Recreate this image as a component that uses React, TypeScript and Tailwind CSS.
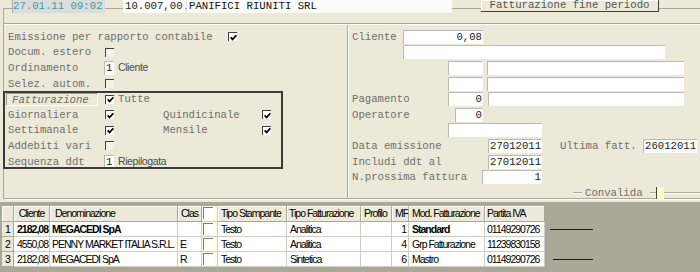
import React from 'react';

const mono = "font-['Liberation_Mono','Courier_New',monospace]";
const sans = "font-['Liberation_Sans',Arial,sans-serif]";

const Check: React.FC<{ on?: boolean }> = ({ on }) => (
  <span
    className={`w-[9px] h-[9px] shrink-0 flex items-center justify-center border-t border-l border-[#404040] ${
      on ? 'bg-white' : 'bg-[#f3f1ea]'
    }`}
  >
    {on && (
      <svg width="7" height="7" viewBox="0 0 7 7">
        <path d="M0.6 3.4 L2.6 5.4 L6.4 1.2" stroke="#000" strokeWidth="1.7" fill="none" />
      </svg>
    )}
  </span>
);

const Field: React.FC<{ className?: string; right?: boolean; children?: React.ReactNode }> = ({
  className = '',
  right,
  children,
}) => (
  <div
    className={`h-[14px] shrink-0 bg-white border-t border-l border-[#bcb9ad] text-[#222] leading-[13px] px-[1px] whitespace-nowrap overflow-hidden ${
      right ? 'text-right' : ''
    } ${className}`}
  >
    {children}
  </div>
);

const Row: React.FC<{ className?: string; children?: React.ReactNode }> = ({ className = 'pl-[4px]', children }) => (
  <div className={`h-[15.6px] flex items-center whitespace-nowrap ${className}`}>{children}</div>
);

const TopRow = () => (
  <div className="-mt-[9px] h-[24px] shrink-0 border-b border-[#aca899]">
    <div className="flex items-start h-[13px]">
      <div className="ml-[8px] w-[93px] h-[13px] bg-[#dcdcdc] border-l border-[#b0b0b0] text-[#3a9c9c] leading-[13px]">
        27.01.11 09:02
      </div>
      <div className="ml-[18px] w-[62px] h-[13px] bg-white text-[#1a1a1a] leading-[13px] pl-[2px]">10.007,00</div>
      <div className="ml-[2px] w-[265px] h-[13px] bg-[#fbfbf9] text-[#111] leading-[13px] pl-[2px]">
        PANIFICI RIUNITI SRL
      </div>
      <div className="ml-[29px] w-[178px] h-[12px] bg-[#ece9d8] border-r border-b border-[#404040] shadow-[inset_1px_1px_0_#fff] text-center leading-[11px] text-[#555]">
        Fatturazione fine periodo
      </div>
    </div>
  </div>
);

const LeftPanel = () => (
  <div className="w-[343px] shrink-0 pt-[4px]">
    <Row>
      <span className="w-[220px]">Emissione per rapporto contabile</span>
      <Check on />
    </Row>
    <Row>
      <span className="w-[97px]">Docum. estero</span>
      <Check />
    </Row>
    <Row>
      <span className="w-[96px]">Ordinamento</span>
      <Field className="w-[10px] pl-[1px]">1</Field>
      <span className={`${sans} ml-[4px] text-[10.5px] tracking-[-0.4px] text-[#4a4a4a]`}>Cliente</span>
    </Row>
    <Row>
      <span className="w-[97px]">Selez. autom.</span>
      <Check />
    </Row>
    <div className="-ml-px w-[280px] outline-2 outline-[#3a3a3a] -outline-offset-2">
      <Row className="pl-[3px]">
        <span className="w-[92px] h-[13px] border-t border-l border-[#9d9a90] border-b border-r border-b-white border-r-white italic leading-[12px] pl-[5px] text-[#6a6a6a]">
          Fatturazione
        </span>
        <span className="ml-[7px]">
          <Check on />
        </span>
        <span className="ml-[4px]">Tutte</span>
      </Row>
      <Row className="pl-[5px]">
        <span className="w-[97px]">Giornaliera</span>
        <Check on />
        <span className="ml-[49px] w-[99px]">Quindicinale</span>
        <Check on />
      </Row>
      <Row className="pl-[5px]">
        <span className="w-[97px]">Settimanale</span>
        <Check on />
        <span className="ml-[49px] w-[99px]">Mensile</span>
        <Check on />
      </Row>
      <Row className="pl-[5px]">
        <span className="w-[97px]">Addebiti vari</span>
        <Check />
      </Row>
      <Row className="pl-[5px]">
        <span className="w-[96px]">Sequenza ddt</span>
        <Field className="w-[10px] pl-[1px]">1</Field>
        <span className={`${sans} ml-[4px] text-[10.5px] tracking-[-0.4px] text-[#4a4a4a]`}>Riepilogata</span>
      </Row>
    </div>
  </div>
);

const RightPanel = () => (
  <div className="flex-1 border-l border-[#aca899] shadow-[inset_1px_0_0_#fff] pt-[4px]">
    <Row>
      <span className="w-[51px]">Cliente</span>
      <Field className="w-[80px]" right>
        0,08
      </Field>
    </Row>
    <Row>
      <Field className="ml-[51px] w-[262px]" />
    </Row>
    <Row>
      <Field className="ml-[96px] w-[35px]" />
      <Field className="ml-[4px] w-[197px]" />
    </Row>
    <Row>
      <Field className="ml-[96px] w-[35px]" />
      <Field className="ml-[4px] w-[197px]" />
    </Row>
    <Row>
      <span className="w-[96px]">Pagamento</span>
      <Field className="w-[35px]" right>
        0
      </Field>
      <Field className="ml-[5px] w-[196px]" />
    </Row>
    <Row>
      <span className="w-[103px]">Operatore</span>
      <Field className="w-[28px]" right>
        0
      </Field>
    </Row>
    <Row>
      <Field className="ml-[96px] w-[94px]" />
    </Row>
    <Row>
      <span className="w-[136px]">Data emissione</span>
      <Field className="w-[54px]">27012011</Field>
      <span className="ml-[18px] w-[83px]">Ultima fatt.</span>
      <Field className="w-[54px] bg-[#f4f4f2]">26012011</Field>
    </Row>
    <Row>
      <span className="w-[136px]">Includi ddt al</span>
      <Field className="w-[54px]">27012011</Field>
    </Row>
    <Row>
      <span className="w-[130px]">N.prossima fattura</span>
      <Field className="w-[60px]" right>
        1
      </Field>
    </Row>
    <Row>
      <span className="ml-[221px] w-[9px] h-[2px] border-t border-[#aca899] bg-white" />
      <span className="ml-[3px] w-[65px]">Convalida</span>
      <span className="w-[6px] h-[2px] border-t border-[#aca899] bg-white" />
      <span className="w-[8px] h-[12px] bg-[#ffffc4] border-l border-[#404040]" />
      <span className="flex-1 h-[2px] border-t border-[#aca899] bg-white" />
    </Row>
  </div>
);

const head = 'h-[16px] shrink-0 bg-[#ece9d8] border-r border-b border-[#aca899] shadow-[inset_1px_1px_0_#fff] leading-[15px] overflow-hidden';
const cell = 'h-[15px] shrink-0 bg-white border-r border-b border-[#cfcdc4] leading-[14px] overflow-hidden';

const rows = [
  { n: '1', cli: '2182,08', den: 'MEGACEDI SpA', clas: '', tf: 'Analitica', mf: '1', mod: 'Standard', iva: '01149290726', bold: true, line: 'ml-[5px] w-[43px]' },
  { n: '2', cli: '4550,08', den: 'PENNY MARKET ITALIA  S.R.L.', clas: 'E', tf: 'Analitica', mf: '4', mod: 'Grp Fatturazione', iva: '11239830158', bold: false, line: '' },
  { n: '3', cli: '2182,08', den: 'MEGACEDI SpA', clas: 'R', tf: 'Sintetica', mf: '6', mod: 'Mastro', iva: '01149290726', bold: false, line: 'ml-[8px] w-[40px]' },
];

const GridBox = () => (
  <div className="w-[16px] shrink-0 h-full bg-[#fffde6] border-r border-b border-[#cfcdc4] pl-px pt-px">
    <div className="w-[10px] h-[12px] bg-white border-t border-l border-[#7a7a7a]" />
  </div>
);

const Grid = () => (
  <div className={`flex-1 pt-[4px] pl-[2px] ${sans} text-[10.5px] tracking-[-1px] text-black whitespace-nowrap`}>
    <div className="flex h-[16px]">
      <div className={`${head} w-[12px]`} />
      <div className={`${head} w-[36px] text-center`}>Cliente</div>
      <div className={`${head} w-[128px] pl-[5px]`}>Denominazione</div>
      <div className={`${head} w-[24px] pl-[3px]`}>Clas</div>
      <GridBox />
      <div className={`${head} w-[69px] pl-[3px]`}>Tipo Stampante</div>
      <div className={`${head} w-[74px] pl-[2px]`}>Tipo Fatturazione</div>
      <div className={`${head} w-[31px] pl-[3px]`}>Profilo</div>
      <div className={`${head} w-[17px] pl-[3px]`}>MF</div>
      <div className={`${head} w-[76px] pl-[3px]`}>Mod. Fatturazione</div>
      <div className={`${head} w-[60px] pl-[2px]`}>Partita IVA</div>
    </div>
    {rows.map((r) => (
      <div key={r.n} className="flex items-center h-[15px]">
        <div className="h-[15px] w-[12px] shrink-0 bg-[#ece9d8] border-r border-b border-[#aca899] text-center leading-[14px]">
          {r.n}
        </div>
        <div className={`${cell} w-[36px] text-right pr-px ${r.bold ? 'font-bold' : ''}`}>{r.cli}</div>
        <div className={`${cell} w-[128px] pl-[2px] ${r.bold ? 'font-bold' : ''}`}>{r.den}</div>
        <div className={`${cell} w-[24px] pl-[2px]`}>{r.clas}</div>
        <GridBox />
        <div className={`${cell} w-[69px] pl-[3px]`}>Testo</div>
        <div className={`${cell} w-[74px] pl-[3px]`}>{r.tf}</div>
        <div className={`${cell} w-[31px]`} />
        <div className={`${cell} w-[17px] text-right pr-[2px]`}>{r.mf}</div>
        <div className={`${cell} w-[76px] pl-[3px] ${r.bold ? 'font-bold' : ''}`}>{r.mod}</div>
        <div className={`${cell} w-[60px] pl-[2px]`}>{r.iva}</div>
        {r.line && <div className={`h-px bg-[#1a1a1a] ${r.line}`} />}
      </div>
    ))}
  </div>
);

export default function App() {
  return (
    <div className="w-[700px] h-[272px] overflow-hidden bg-[#aca899] flex flex-col">
      <div className={`h-[202px] shrink-0 bg-[#ece9d8] pt-[8px] pl-[3px] ${mono} text-[10.67px] text-[#6e6e6e]`}>
        <div className="h-[192px] border-t border-l border-b border-t-[#aca899] border-l-[#aca899] border-b-white flex flex-col">
          <TopRow />
          <div className="flex-1 min-h-0 flex border-t border-t-white border-b border-b-[#aca899]">
            <LeftPanel />
            <RightPanel />
          </div>
        </div>
      </div>
      <Grid />
    </div>
  );
}
